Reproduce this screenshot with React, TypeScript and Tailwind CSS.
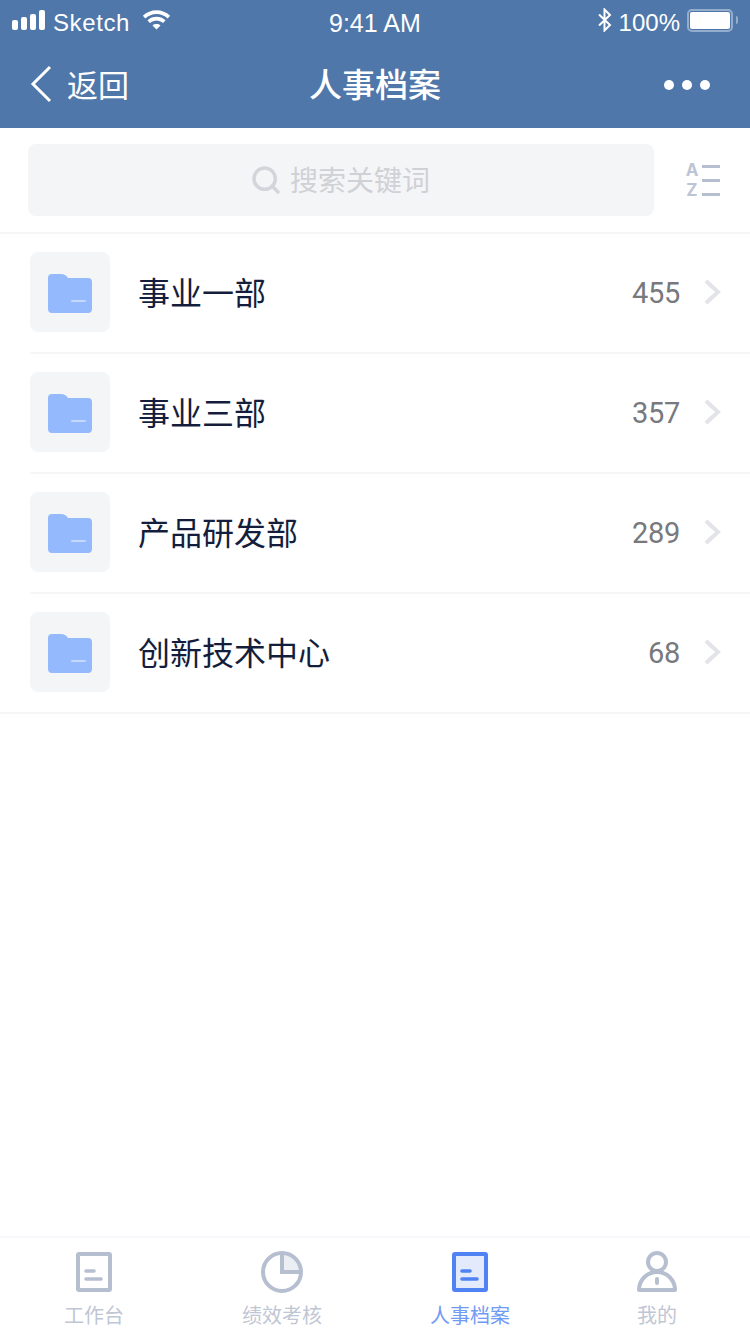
import { Search } from 'lucide-react';

const cjk = '"Noto Sans CJK SC", "Noto Sans", sans-serif';

const departments = [
  { name: '事业一部', count: 455 },
  { name: '事业三部', count: 357 },
  { name: '产品研发部', count: 289 },
  { name: '创新技术中心', count: 68 },
];

function StatusBar() {
  return (
    <div className="h-[40px] relative flex items-center justify-between pt-[6px] pl-[12px] pr-[12px] text-white text-[24px] font-['Liberation_Sans',sans-serif]">
      <div className="flex items-center">
        <div className="flex items-end gap-[3px] h-[20px] mb-[6px]">
          <span className="w-[6px] h-[10px] rounded-[2px] bg-white" />
          <span className="w-[6px] h-[13px] rounded-[2px] bg-white" />
          <span className="w-[6px] h-[16px] rounded-[2px] bg-white" />
          <span className="w-[6px] h-[20px] rounded-[2px] bg-white" />
        </div>
        <span className="ml-[8px] tracking-[0.6px]">Sketch</span>
        <svg width="29" height="21" viewBox="0 0 30 22" className="ml-[12px] mb-[6px]" fill="none" stroke="white" strokeWidth="3.8">
          <path d="M2 7.5C9.5 .5 20.5 .5 28 7.5" />
          <path d="M6.8 12.2C11.5 8 18.5 8 23.2 12.2" />
          <path d="M15 20.5L10.8 16.2C13 14.3 17 14.3 19.2 16.2Z" fill="white" stroke="none" />
        </svg>
      </div>
      <span className="absolute left-[329px] top-[5px] text-[25px]">9:41 AM</span>
      <div className="flex items-center">
        <svg width="16" height="24" viewBox="0 0 16 24" className="mb-[6px]" fill="none" stroke="white" strokeWidth="2">
          <path d="M2 6.5L13 17L7.5 22.5V1.5L13 7L2 17.5" />
        </svg>
        <span className="ml-[6px]">100%</span>
        <div className="ml-[7px] w-[46px] h-[23px] mb-[6px] rounded-[5px] border-2 border-white/40 p-[1px]">
          <div className="h-full rounded-[2px] bg-white" />
        </div>
        <span className="w-[2px] h-[8px] mb-[6px] ml-[3px] rounded-r-full bg-white/40" />
      </div>
    </div>
  );
}

function NavBar() {
  return (
    <div className="h-[88px] relative flex items-center justify-between pl-[30px] pr-[40px] text-white">
      <div className="flex items-center">
        <svg width="22" height="38" viewBox="0 0 22 38" fill="none" stroke="white" strokeWidth="3" className="mb-[1px]">
          <path d="M20 2L3 19L20 36" />
        </svg>
        <span className="ml-[15px] mb-[2px] text-[31px] leading-none" style={{ fontFamily: cjk }}>返回</span>
      </div>
      <span className="absolute left-0 right-0 top-[20px] text-center text-[33px] leading-[46px] font-medium" style={{ fontFamily: cjk }}>人事档案</span>
      <div className="flex items-center gap-[8px] mt-[2px]">
        <span className="w-[10px] h-[10px] rounded-full bg-white" />
        <span className="w-[10px] h-[10px] rounded-full bg-white" />
        <span className="w-[10px] h-[10px] rounded-full bg-white" />
      </div>
    </div>
  );
}

function SortIcon() {
  return (
    <div className="flex items-center gap-[4px]">
      <div className="w-[12px] flex flex-col items-center font-['Inter',sans-serif] font-bold text-[17px] leading-[20px] text-[#bdc5d4]">
        <span>A</span>
        <span>Z</span>
      </div>
      <div className="flex flex-col gap-[11px]">
        <span className="block w-[18px] h-[3px] bg-[#b6bfd0]" />
        <span className="block w-[18px] h-[3px] bg-[#b6bfd0]" />
        <span className="block w-[18px] h-[3px] bg-[#b6bfd0]" />
      </div>
    </div>
  );
}

function FolderIcon() {
  return (
    <svg width="44" height="39" viewBox="0 0 44 39" className="mt-[3px]">
      <path d="M0 4a4 4 0 0 1 4-4h9c3 0 5 1 7 4h20a4 4 0 0 1 4 4v27a4 4 0 0 1-4 4H4a4 4 0 0 1-4-4Z" fill="#94b9fc" />
      <rect x="23" y="26" width="15" height="2" rx="1" fill="#c5d8fb" />
    </svg>
  );
}

function Row({ name, count, last }: { name: string; count: number; last: boolean }) {
  return (
    <div className={last ? 'border-b-2 border-[#f5f6f8]' : 'ml-[30px] border-b-2 border-[#f5f6f8]'}>
      <div className={last ? 'h-[118px] pl-[30px] pb-[2px] flex items-center' : 'h-[118px] pb-[2px] flex items-center'}>
        <div className="w-[80px] h-[80px] rounded-[8px] bg-[#f4f5f7] flex items-center justify-center">
          <FolderIcon />
        </div>
        <span className="ml-[28px] mb-[2px] flex-1 text-[32px] leading-none text-[#141e3c]" style={{ fontFamily: cjk }}>{name}</span>
        <span className="mt-[2px] text-[29px] leading-none text-[#77797d] font-['Roboto',sans-serif] tracking-[-0.3px]">{count}</span>
        <svg width="18" height="26" viewBox="0 0 18 26" className="ml-[24px] mr-[28px]" fill="none" stroke="#e2e4ea" strokeWidth="4">
          <path d="M2 2L14 13L2 24" />
        </svg>
      </div>
    </div>
  );
}

function TabIcon({ name }: { name: string }) {
  if (name === 'pie') {
    return (
      <svg width="44" height="44" viewBox="0 0 44 44" fill="none">
        <path d="M22 3a19 19 0 0 1 19 19H22Z" fill="#ebeef2" />
        <circle cx="22" cy="22" r="19" stroke="#b6bfd0" strokeWidth="4" />
        <path d="M22 3V22H41" stroke="#b6bfd0" strokeWidth="4" />
      </svg>
    );
  }
  if (name === 'user') {
    return (
      <svg width="44" height="44" viewBox="0 0 44 44" fill="none">
        <circle cx="22" cy="12" r="9" stroke="#b6bfd0" strokeWidth="4" fill="white" />
        <path d="M4 40C4 30 12 22 22 22S40 30 40 40Z" stroke="#b6bfd0" strokeWidth="4" strokeLinejoin="round" />
        <path d="M22 29V33" stroke="#b6bfd0" strokeWidth="4" strokeLinecap="round" />
      </svg>
    );
  }
  const active = name === 'docActive';
  const color = active ? '#4f82f3' : '#b6bfd0';
  return (
    <svg width="36" height="40" viewBox="0 0 36 40" fill="none">
      <rect x="2" y="2" width="32" height="36" rx="1" fill={active ? '#e3eafc' : 'none'} stroke={color} strokeWidth="4" />
      <path d="M10 19H18M10 27H25" stroke={color} strokeWidth="3.6" strokeLinecap="round" />
    </svg>
  );
}

function TabBar() {
  const tabs = [
    { label: '工作台', icon: 'doc', active: false, width: 'w-[188px]' },
    { label: '绩效考核', icon: 'pie', active: false, width: 'w-[188px]' },
    { label: '人事档案', icon: 'docActive', active: true, width: 'w-[188px]' },
    { label: '我的', icon: 'user', active: false, width: 'w-[186px]' },
  ];
  return (
    <div className="h-[98px] border-t-2 border-[#f7f7fb] flex">
      {tabs.map((t) => (
        <div key={t.label} className={`${t.width} flex flex-col items-center pt-[12px]`}>
          <div className="h-[44px] flex items-center justify-center">
            <TabIcon name={t.icon} />
          </div>
          <span className={t.active ? 'mt-[6px] text-[20px] leading-[30px] text-[#6f9af5]' : 'mt-[6px] text-[20px] leading-[30px] text-[#bfc6d4]'} style={{ fontFamily: cjk }}>{t.label}</span>
        </div>
      ))}
    </div>
  );
}

export default function App() {
  return (
    <div className="w-[750px] h-[1334px] bg-white flex flex-col overflow-hidden">
      <div className="bg-[#4f77aa]">
        <StatusBar />
        <NavBar />
      </div>
      <div className="h-[106px] flex pt-[16px] pl-[28px] border-b-2 border-[#f5f6f8]">
        <div className="w-[626px] h-[72px] rounded-[8px] bg-[#f4f5f7] flex items-center justify-center">
          <Search size={32} strokeWidth={2.6} className="text-[#d3d5da] mr-[8px]" />
          <span className="mb-[2px] mr-[2px] text-[28px] text-[#cfd1d6] leading-none" style={{ fontFamily: cjk }}>搜索关键词</span>
        </div>
        <div className="ml-[32px] h-[72px] flex items-center">
          <SortIcon />
        </div>
      </div>
      <div className="flex-1">
        {departments.map((d, i) => (
          <Row key={d.name} name={d.name} count={d.count} last={i === departments.length - 1} />
        ))}
      </div>
      <TabBar />
    </div>
  );
}
